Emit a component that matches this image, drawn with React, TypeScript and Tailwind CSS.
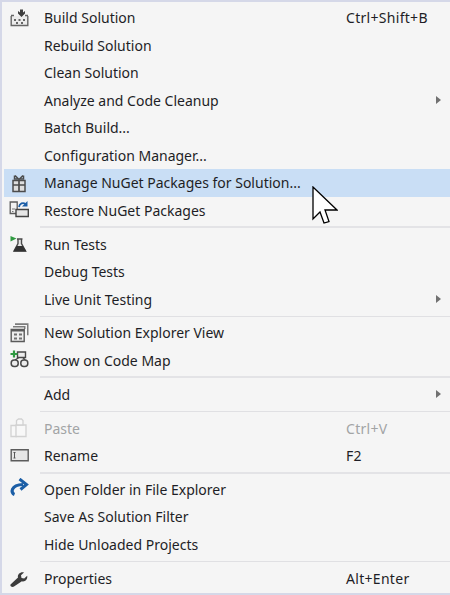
import React from "react";

const Ic = ({ children }: { children: React.ReactNode }) => (
  <svg width="22" height="22" viewBox="0 0 22 22" className="block">{children}</svg>
);

const icons: Record<string, React.ReactNode> = {
  build: (
    <Ic>
      <path d="M3.200 9v9.500h16.600V9" fill="#ececec" stroke="#666" strokeWidth="1.400" />
      <path d="M3 8.500h3M17 8.500h3" stroke="#666" strokeWidth="1.400" />
      <path d="M12 2.500h3v3l2-1.500v2.500L13.500 10 10 6.500V4l2 1.500z" fill="#3e3e3e" />
      <path d="M6 12h2v2H6zM10.500 12h2v2h-2zM15 12h2v2h-2zM8 15h2v2H8zM13 15h2v2h-2z" fill="#666" />
    </Ic>
  ),
  nuget: (
    <Ic>
      <path d="M5 8.500h12v11H5z" fill="#dedede" stroke="#4c4c4c" strokeWidth="1.500" />
      <path d="M5 13h12M11 8.500v11" stroke="#4c4c4c" strokeWidth="1.700" />
      <path d="M7 3.500l4 4 4-4M6.500 3.500v3.500h9V3.500" fill="none" stroke="#4c4c4c" strokeWidth="1.500" />
    </Ic>
  ),
  restore: (
    <Ic>
      <path d="M2.200 3h7v11.500h-7z" fill="#f2f2f2" stroke="#5c5c5c" strokeWidth="1.300" />
      <path d="M4 10h3M4 12.500h1.500" stroke="#777" strokeWidth="1" />
      <path d="M8 10.500h12.300v7H8z" fill="#e6e6e6" stroke="#444" strokeWidth="1.400" />
      <path d="M11 8c.5-3.500 4-5 6.500-3" fill="none" stroke="#1c5fa8" strokeWidth="1.800" />
      <path d="M19.500 2v5.500H14z" fill="#1c5fa8" />
    </Ic>
  ),
  test: (
    <Ic>
      <path d="M2.500 3l6 2.500-6 3z" fill="#2f9a41" />
      <path d="M9 6h5.500M10 6.500v4L6 18h11.500l-4-7.500v-4" fill="#e6e6e6" stroke="#4a4a4a" strokeWidth="1.400" />
      <path d="M8.500 13h6.500l3.500 5.500h-13z" fill="#333" />
    </Ic>
  ),
  view: (
    <Ic>
      <path d="M7 1.300h13.500v12H19V3H7z" fill="#7c7c7c" />
      <path d="M5 4h12.500v3H16V5.500H5z" fill="#7c7c7c" />
      <path d="M3.200 7.500h13v12h-13z" fill="#ededed" stroke="#5a5a5a" strokeWidth="1.400" />
      <path d="M3 7.500h13.500v2H3z" fill="#5a5a5a" />
      <path d="M6 11.500h3v2H6zM11 11.500h3v2h-3zM6 15.500h3v2H6zM11 15.500h3v2h-3z" fill="#707070" />
    </Ic>
  ),
  map: (
    <Ic>
      <path d="M9.500 3h8v5.500h-8z" fill="#ececec" stroke="#484848" strokeWidth="1.400" />
      <path d="M11 8.500L7 11M15 8.500l2 2.500" stroke="#484848" strokeWidth="1.400" />
      <rect x="3.200" y="11" width="7" height="6.500" rx="3" fill="#ececec" stroke="#484848" strokeWidth="1.500" />
      <rect x="12.800" y="11" width="7" height="6.500" rx="3" fill="#ececec" stroke="#484848" strokeWidth="1.500" />
      <path d="M2.500 5h7M6 1.500v7" stroke="#2f9a41" strokeWidth="2.200" />
    </Ic>
  ),
  paste: (
    <Ic>
      <path d="M3 8.500h5.500v11H3z" fill="#f8f8f8" stroke="#d2d2d2" strokeWidth="1.300" />
      <path d="M8 8h10v11.500H8z" fill="#f8f8f8" stroke="#d2d2d2" strokeWidth="1.300" />
      <path d="M8.500 8V3.500l2-1.500h3l1.500 1.500V8z" fill="#f8f8f8" stroke="#d2d2d2" strokeWidth="1.300" />
    </Ic>
  ),
  rename: (
    <Ic>
      <path d="M3.200 4.700h17v11h-17z" fill="#e6e6e6" stroke="#5c5c5c" strokeWidth="1.400" />
      <path d="M5.500 7.500h2M5.500 13h2M6.500 7.500V13" stroke="#555" strokeWidth="1" fill="none" />
    </Ic>
  ),
  open: (
    <Ic>
      <path d="M6.500 16.500C2.500 15 2.500 7 15 6.500" fill="none" stroke="#1b5ea6" strokeWidth="3.200" />
      <path d="M11.500 1l7 5.500-6 5" fill="none" stroke="#1b5ea6" strokeWidth="3" />
    </Ic>
  ),
  props: (
    <Ic>
      <path d="M2.500 17.500L10 10.500c-.8-3 2.500-6 6-5l-3 2.800.5 2.700 2.700.5 3-2.800c.7 3.500-2.300 6.500-5.300 5.500L6 19.500c-1.500 1.300-4.500-.5-3.500-2z" fill="#3c3c3c" />
    </Ic>
  ),
};

type Item = { t: string; i?: string; s?: string; a?: boolean; h?: boolean; d?: boolean };

const Row = ({ t, i, s, a, h, d }: Item) => (
  <div className={`flex items-center h-[27.5px] ${h ? "bg-[#c9def5]" : ""}`}>
    <div className="w-[40px] flex justify-start items-center pl-[3.500px] shrink-0">{i ? icons[i] : null}</div>
    <div className={`flex-1 whitespace-nowrap ${d ? "text-[#a2a4a5]" : ""}`}>{t}</div>
    <div className={`w-[90px] shrink-0 whitespace-nowrap tracking-[0.3px] ${d ? "text-[#a2a4a5]" : ""}`}>{s}</div>
    <div className="w-[14px] shrink-0">
      {a ? <div className="w-0 h-0 border-y-[4px] border-y-transparent border-l-[5px] border-l-[#717171]" /> : null}
    </div>
  </div>
);

const Sep = ({ thick }: { thick: boolean }) => (
  <div className="h-[6.35px] flex items-center pl-[36px]">
    <div className={thick ? "h-[2px] w-full bg-[#e3e3e6]" : "h-[1px] w-full bg-[#e0e0e3]"} />
  </div>
);

const groups: Item[][] = [
  [
    { t: "Build Solution", i: "build", s: "Ctrl+Shift+B" },
    { t: "Rebuild Solution" },
    { t: "Clean Solution" },
    { t: "Analyze and Code Cleanup", a: true },
    { t: "Batch Build..." },
    { t: "Configuration Manager..." },
    { t: "Manage NuGet Packages for Solution...", i: "nuget", h: true },
    { t: "Restore NuGet Packages", i: "restore" },
  ],
  [
    { t: "Run Tests", i: "test" },
    { t: "Debug Tests" },
    { t: "Live Unit Testing", a: true },
  ],
  [
    { t: "New Solution Explorer View", i: "view" },
    { t: "Show on Code Map", i: "map" },
  ],
  [{ t: "Add", a: true }],
  [
    { t: "Paste", i: "paste", s: "Ctrl+V", d: true },
    { t: "Rename", i: "rename", s: "F2" },
  ],
  [
    { t: "Open Folder in File Explorer", i: "open" },
    { t: "Save As Solution Filter" },
    { t: "Hide Unloaded Projects" },
  ],
  [{ t: "Properties", i: "props", s: "Alt+Enter" }],
];

export default function App() {
  return (
    <div className="relative w-[450px] h-[595px] overflow-hidden bg-[#f5f5f5] border-l-2 border-t-2 border-b-2 border-[#d5d8e8] pl-[2px] pt-[2px] text-[14px] text-[#1e1e26] font-['Noto_Sans','Open_Sans',sans-serif]">
      {groups.map((g, n) => (
        <React.Fragment key={n}>
          {n > 0 ? <Sep thick={n % 2 === 1} /> : null}
          {g.map((it) => (
            <Row key={it.t} {...it} />
          ))}
        </React.Fragment>
      ))}
      <svg width="26" height="40" viewBox="0 0 26 40" className="absolute left-[310px] top-[184px]">
        <path d="M1 1V33L8 26L12 37L17 35.500L13 24H25Z" fill="#fff" stroke="#000" strokeWidth="1.300" strokeLinejoin="miter" />
      </svg>
    </div>
  );
}
